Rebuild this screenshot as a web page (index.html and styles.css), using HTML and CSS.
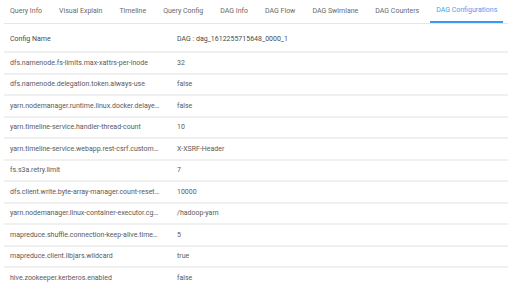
FILE: index.html
```html
<!DOCTYPE html>
<html lang="en">
<head>
    <meta charset="UTF-8">
    <title>DAG Configurations</title>
    <link rel="stylesheet" href="styles.css">
</head>
<body>

    <!-- Вкладки -->
    <ul class="tabs">
        <li>Query Info</li>
        <li>Visual Explain</li>
        <li>Timeline</li>
        <li>Query Config</li>
        <li>DAG Info</li>
        <li>DAG Flow</li>
        <li>DAG Swimlane</li>
        <li>DAG Counters</li>
        <li class="active">DAG Configurations</li>
    </ul>

    <!-- Таблица конфигурации -->
    <table class="config-table">
        <thead>
            <tr>
                <th class="name-col">Config Name</th>
                <th>DAG : dag_1612255715648_0000_1</th>
            </tr>
        </thead>
        <tbody>
            <tr><td class="name-col">dfs.namenode.fs-limits.max-xattrs-per-inode</td><td>32</td></tr>
            <tr><td class="name-col">dfs.namenode.delegation.token.always-use</td><td>false</td></tr>
            <tr><td class="name-col">yarn.nodemanager.runtime.linux.docker.delayed-removal.allowed</td><td>false</td></tr>
            <tr><td class="name-col">yarn.timeline-service.handler-thread-count</td><td>10</td></tr>
            <tr><td class="name-col">yarn.timeline-service.webapp.rest-csrf.custom-header</td><td>X-XSRF-Header</td></tr>
            <tr><td class="name-col">fs.s3a.retry.limit</td><td>7</td></tr>
            <tr><td class="name-col">dfs.client.write.byte-array-manager.count-reset-time-period-ms</td><td>10000</td></tr>
            <tr><td class="name-col">yarn.nodemanager.linux-container-executor.cgroups.hierarchy</td><td>/hadoop-yarn</td></tr>
            <tr><td class="name-col">mapreduce.shuffle.connection-keep-alive.timeout-ms</td><td>5</td></tr>
            <tr><td class="name-col">mapreduce.client.libjars.wildcard</td><td>true</td></tr>
            <tr><td class="name-col">hive.zookeeper.kerberos.enabled</td><td>false</td></tr>
        </tbody>
    </table>

</body>
</html>
```

FILE: styles.css
```css
body {
    font-family: Roboto, "Liberation Sans", sans-serif;
    font-size: 7px;
    color: #5a5a5a;
    background-color: #fff;
    margin: 0;
    padding: 0 4px;
}

.tabs {
    list-style: none;
    margin: 0;
    padding: 0;
    display: flex;
    gap: 5px;
    height: 23px;
    border-bottom: 1px solid #e6e6e6;
}

.tabs li {
    padding: 0 6px;
    line-height: 22px;
    color: #6a6a6a;
    white-space: nowrap;
}

.tabs li.active {
    color: #4a9ef0;
    border-bottom: 2px solid #3d97f0;
    line-height: 21px;
}

.config-table {
    width: 100%;
    border-collapse: collapse;
    table-layout: fixed;
}

.config-table th,
.config-table td {
    text-align: left;
    padding: 0 6px;
    border-bottom: 2px solid #f0f0f0;
    white-space: nowrap;
    overflow: hidden;
    text-overflow: ellipsis;
}

.config-table th {
    font-weight: normal;
    color: #4a4a4a;
    height: 25px;
    padding-top: 2px;
}

.config-table td {
    height: 19.5px;
}

.config-table .name-col {
    width: 150px;
    padding-right: 11px;
}

.config-table tbody tr:last-child td {
    border-bottom: none;
}
```
